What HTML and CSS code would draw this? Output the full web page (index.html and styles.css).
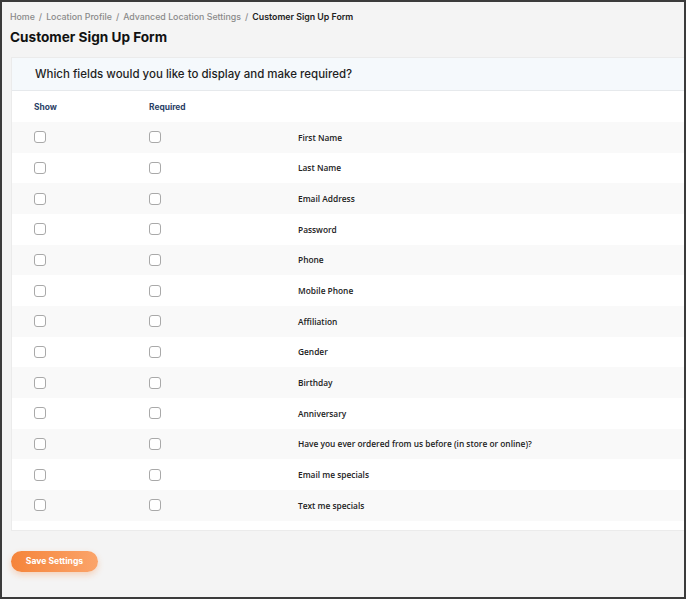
FILE: index.html
```html
<!DOCTYPE html>
<html>
<head>
<meta charset="utf-8">
<link rel="stylesheet" href="styles.css">
</head>
<body>
<div class="frame">
  <nav class="crumbs">
    <span class="crumb">Home</span><span class="sep">/</span><span class="crumb">Location Profile</span><span class="sep">/</span><span class="crumb">Advanced Location Settings</span><span class="sep">/</span><span class="current">Customer Sign Up Form</span>
  </nav>
  <h1 class="title">Customer Sign Up Form</h1>
  <section class="card">
    <div class="card-head">Which fields would you like to display and make required?</div>
    <div class="row head-row">
      <div class="col-show">Show</div>
      <div class="col-req">Required</div>
      <div class="col-label"></div>
    </div>
    <div class="row"><div class="col-show"><span class="box"></span></div><div class="col-req"><span class="box"></span></div><div class="col-label">First Name</div></div>
    <div class="row"><div class="col-show"><span class="box"></span></div><div class="col-req"><span class="box"></span></div><div class="col-label">Last Name</div></div>
    <div class="row"><div class="col-show"><span class="box"></span></div><div class="col-req"><span class="box"></span></div><div class="col-label">Email Address</div></div>
    <div class="row"><div class="col-show"><span class="box"></span></div><div class="col-req"><span class="box"></span></div><div class="col-label">Password</div></div>
    <div class="row"><div class="col-show"><span class="box"></span></div><div class="col-req"><span class="box"></span></div><div class="col-label">Phone</div></div>
    <div class="row"><div class="col-show"><span class="box"></span></div><div class="col-req"><span class="box"></span></div><div class="col-label">Mobile Phone</div></div>
    <div class="row"><div class="col-show"><span class="box"></span></div><div class="col-req"><span class="box"></span></div><div class="col-label">Affiliation</div></div>
    <div class="row"><div class="col-show"><span class="box"></span></div><div class="col-req"><span class="box"></span></div><div class="col-label">Gender</div></div>
    <div class="row"><div class="col-show"><span class="box"></span></div><div class="col-req"><span class="box"></span></div><div class="col-label">Birthday</div></div>
    <div class="row"><div class="col-show"><span class="box"></span></div><div class="col-req"><span class="box"></span></div><div class="col-label">Anniversary</div></div>
    <div class="row"><div class="col-show"><span class="box"></span></div><div class="col-req"><span class="box"></span></div><div class="col-label">Have you ever ordered from us before (in store or online)?</div></div>
    <div class="row"><div class="col-show"><span class="box"></span></div><div class="col-req"><span class="box"></span></div><div class="col-label">Email me specials</div></div>
    <div class="row"><div class="col-show"><span class="box"></span></div><div class="col-req"><span class="box"></span></div><div class="col-label">Text me specials</div></div>
  </section>
  <button class="save">Save Settings</button>
</div>
</body>
</html>
```

FILE: styles.css
```css
html, body {
  margin: 0;
  padding: 0;
  background: #ffffff;
}
.frame {
  box-sizing: border-box;
  width: 686px;
  height: 599px;
  border: 2px solid #3b3b3b;
  background: #f4f4f4;
  padding: 9px 0 0 8px;
  font-family: Inter, "Liberation Sans", sans-serif;
  display: flex;
  flex-direction: column;
  align-items: flex-start;
}
.crumbs {
  font-size: 8.8px;
  line-height: 12px;
  color: #8a8a8a;
  font-weight: 500;
  white-space: nowrap;
}
.sep {
  margin: 0 4px;
}
.current {
  color: #222;
  font-weight: 600;
}
.title {
  margin: 5px 0 0 0;
  font-size: 13.6px;
  line-height: 18px;
  font-weight: 700;
  color: #111;
}
.card {
  margin: 11px 0 0 1px;
  align-self: stretch;
  background: #fff;
  border: 1px solid #ebebeb;
  border-right: none;
  padding-bottom: 9px;
}
.card-head {
  height: 32px;
  display: flex;
  align-items: center;
  padding-left: 23px;
  background: #f5f9fc;
  border-bottom: 1px solid #e6e9ec;
  font-size: 11.5px;
  font-weight: 500;
  color: #1e1e1e;
}
.row {
  display: flex;
  align-items: center;
  height: 30.67px;
  padding-left: 22px;
}
.row:nth-child(odd) {
  background: #f9f9f9;
}
.head-row {
  height: 31px;
  background: #fff;
  font-size: 8.4px;
  font-weight: 700;
  color: #2b3f66;
}
.col-show {
  width: 115px;
  display: flex;
  align-items: center;
}
.col-req {
  width: 149px;
  display: flex;
  align-items: center;
}
.col-label {
  font-family: "Open Sans", "Noto Sans", sans-serif;
  font-size: 8.35px;
  font-weight: 600;
  color: #222;
}
.box {
  box-sizing: border-box;
  width: 12px;
  height: 12px;
  border: 1px solid #a9a9a9;
  border-radius: 3px;
  background: #fff;
}
.save {
  margin: 20px 0 0 1px;
  width: 87px;
  height: 21px;
  border: none;
  border-radius: 11px;
  background: linear-gradient(90deg, #f5843a 0%, #fba46a 100%);
  box-shadow: 0 3px 6px rgba(245, 132, 58, 0.3);
  color: #fff;
  font-family: Inter, "Liberation Sans", sans-serif;
  font-size: 8.6px;
  font-weight: 700;
  padding: 0;
}
```
